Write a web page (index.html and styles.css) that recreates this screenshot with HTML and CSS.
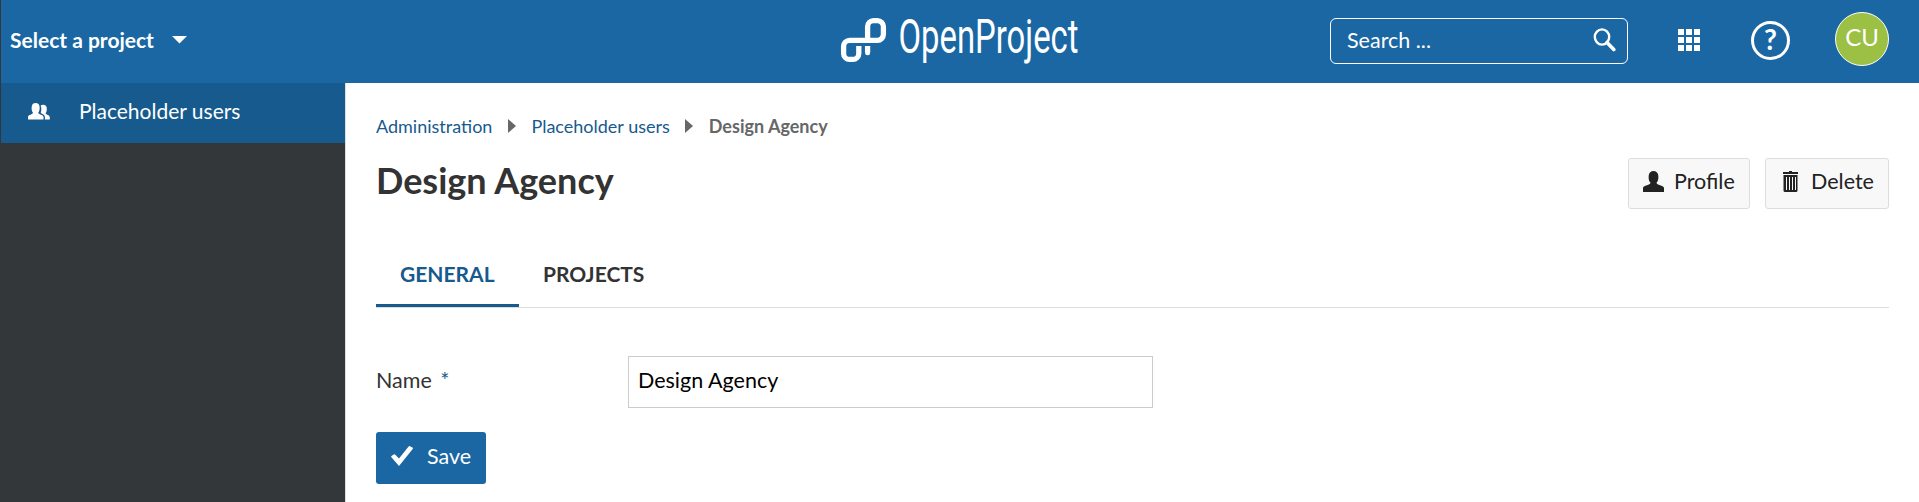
FILE: index.html
```html
<!DOCTYPE html>
<html lang="en">
<head>
<meta charset="utf-8">
<title>Design Agency - OpenProject</title>
<link rel="stylesheet" href="styles.css">
</head>
<body>
<header class="top-bar">
  <button class="project-select">Select a project
    <svg width="16" height="8" viewBox="0 0 16 8"><path d="M0 0h15L7.500 7.500z" fill="currentColor"/></svg>
  </button>
  <svg class="logo" width="242" height="54" viewBox="0 0 242 54" role="img" aria-label="OpenProject">
    <g fill="none" stroke="#fff" stroke-width="5.300">
      <path d="M27.600 27.300V13.600A6 6 0 0 1 33.600 7.600H37.400A6 6 0 0 1 43.400 13.600V21.300A6 6 0 0 1 37.400 27.300H9.600A6 6 0 0 0 3.600 33.300V40.400A6 6 0 0 0 9.600 46.400H12.800A6 6 0 0 0 18.800 40.400V33"/>
      <path d="M27.600 33V39"/>
      <path d="M27.600 39v.8" stroke-linecap="round" stroke-width="5"/>
    </g>
    <text class="wordmark" x="58.500" y="40" textLength="180" lengthAdjust="spacingAndGlyphs">OpenProject</text>
  </svg>
  <div class="top-tools">
    <div class="search"><span>Search ...</span>
      <svg width="23" height="24" viewBox="0 0 23 24" fill="none" stroke="currentColor"><ellipse cx="9" cy="9" rx="7.200" ry="7.600" stroke-width="2.400"/><path d="M14 14.500l6.800 7" stroke-width="3.600" stroke-linecap="round"/></svg>
    </div>
    <svg class="modules" width="22" height="22" viewBox="0 0 22 22" fill="currentColor"><path d="M0 0h6v6H0zM8 0h6v6H8zM16 0h6v6h-6zM0 8h6v6H0zM8 8h6v6H8zM16 8h6v6h-6zM0 16h6v6H0zM8 16h6v6H8zM16 16h6v6h-6z"/></svg>
    <div class="help">?</div>
    <div class="avatar">CU</div>
  </div>
</header>
<div class="layout">
  <nav class="sidebar">
    <a class="menu-item">
      <svg width="22" height="17" viewBox="0 0 22 17" fill="currentColor"><path d="M0 16.500V14C0 11.800 5 11.500 5 9.800C3.700 8.500 3.500 6 3.700 3.800C4 1 5.500 0 7.600 0S11.300 1 11.600 3.800C11.800 6 11.500 8.500 10.200 9.800C10.200 11.500 15.500 11.800 15.500 14V16.500z"/><path d="M12.600 2.600C13.400 1.900 14.500 1.500 15.700 1.700C17.800 2 18.800 3.200 18.800 5.500C18.800 7.500 18.600 9 17.600 10.300C17.700 11.800 21.800 12 21.800 14.200V16.500H16.900V13.800C16.700 11.800 14.400 11 12.700 9.900C13.600 7.700 13.600 5 12.600 2.600z"/></svg>
      <span>Placeholder users</span>
    </a>
  </nav>
  <main class="content">
    <div class="breadcrumb">
      <a>Administration</a>
      <svg width="8" height="14" viewBox="0 0 8 14"><path d="M0 0l8 7-8 7z" fill="#676767"/></svg>
      <a>Placeholder users</a>
      <svg width="8" height="14" viewBox="0 0 8 14"><path d="M0 0l8 7-8 7z" fill="#676767"/></svg>
      <strong>Design Agency</strong>
    </div>
    <div class="title-row">
      <h1>Design Agency</h1>
      <div class="actions">
        <button class="button profile">
          <svg width="21" height="21" viewBox="0 0 21 21" fill="currentColor"><path d="M0 21V16.800C.5 14.500 7.500 14 7.500 11.800C5.600 10 5.500 7 5.700 4.500C6 1.500 8 0 10.500 0S15 1.500 15.300 4.500C15.500 7 15.400 10 13.500 11.800C13.500 14 20.500 14.500 21 16.800V21z"/></svg>
          <span>Profile</span>
        </button>
        <button class="button delete">
          <svg width="15" height="21" viewBox="0 0 15 21" fill="currentColor"><path fill-rule="evenodd" d="M6 0h3v1h6v2H0V1h6zM.5 4h14v15.500a1.500 1.500 0 0 1-1.500 1.500H2a1.500 1.500 0 0 1-1.500-1.500zM3 6v13h1V6zM6 6v13h1V6zM9 6v13h1V6zM12 6v13h1V6z"/></svg>
          <span>Delete</span>
        </button>
      </div>
    </div>
    <div class="tabs"><a class="tab active">GENERAL</a><a class="tab">PROJECTS</a></div>
    <form class="form">
      <div class="field"><label for="name">Name <span class="required">*</span></label><input id="name" type="text" value="Design Agency"></div>
      <button class="save" type="button">
        <svg width="22" height="20" viewBox="0 0 22 20" fill="currentColor"><path d="M.4 11.200Q-.2 10.400.5 9.900L2.700 8.400Q3.400 8 4 8.600L8 12.500L17.600.6Q18.200-.2 19 .3L21.400 1.500Q22.300 2 21.700 2.900L8 20z"/></svg>
        <span>Save</span>
      </button>
    </form>
  </main>
</div>
</body>
</html>
```
FILE: styles.css
```css
* { box-sizing: border-box; }
body { margin: 0; height: 502px; overflow: hidden; background: #fff; color: #333; font: 21px/30px Lato, sans-serif; border-left: 1px solid #333739; }
button, input { font: inherit; margin: 0; }
svg { display: block; flex: none; }
h1 { margin: 0; }
.top-bar { height: 83px; background: #1a67a3; color: #fff; display: grid; grid-template-columns: 839px 242px 1fr; align-items: start; }
.project-select { border: 0; background: none; color: inherit; padding: 25px 0 0 9px; font-weight: 700; display: flex; align-items: center; gap: 18px; }
.logo { margin-top: 13px; overflow: visible; }
.wordmark { font-family: Roboto, sans-serif; font-size: 48px; font-weight: 400; line-height: 50px; fill: #fff; }
.top-tools { display: flex; justify-content: flex-end; padding-right: 30px; }
.search { width: 298px; height: 46px; margin-top: 18px; border: 1px solid #fff; border-radius: 6px; display: flex; align-items: center; justify-content: space-between; padding: 0 11px 2px 16px; font-size: 21.5px; }
.modules { margin: 29px 51px 0 50px; }
.help { width: 39px; height: 39px; margin-top: 21px; border: 3px solid #fff; border-radius: 50%; font-size: 28px; font-weight: 700; line-height: 31px; text-align: center; }
.avatar { width: 54px; height: 54px; margin: 12px 0 0 45px; border: 1px solid #fff; border-radius: 50%; background: #9bc043; font-size: 24px; line-height: 47px; text-align: center; }
.layout { display: flex; height: 419px; }
.sidebar { width: 344px; background: #333739; color: #fff; }
.menu-item { display: flex; align-items: center; height: 60px; background: #175a8e; padding: 0 0 4px 27px; gap: 29px; }
.content { flex: 1; padding: 28px 30px 0 30px; border-left: 1px solid #ddd; }
.breadcrumb { display: flex; align-items: center; gap: 15.5px; font-size: 18px; line-height: 30px; color: #676767; }
.breadcrumb a { color: #175a8e; }
.title-row { display: flex; justify-content: space-between; align-items: flex-start; margin-top: 16px; }
.title-row h1 { font-size: 36px; line-height: 46px; }
.actions { display: flex; gap: 15px; padding-top: 1px; }
.button { height: 51px; border: 1px solid #ddd; border-radius: 3px; background: #f8f8f8; color: #222; display: flex; align-items: center; padding: 0 0 5px 14px; font-size: 21.5px; }
.profile { width: 122px; gap: 10px; }
.delete { width: 124px; padding-left: 17px; gap: 13px; }
.tabs { display: flex; height: 99px; border-bottom: 1px solid #ddd; align-items: flex-end; font-weight: 700; }
.tab { height: 49px; padding: 0 24px; line-height: 31px; border-bottom: 3px solid transparent; }
.tab.active { width: 143px; color: #175a8e; border-color: #175a8e; }
.form { padding-top: 48px; font-size: 21.5px; }
.field { display: flex; }
.field label { width: 252px; padding-top: 9px; }
.required { color: #175a8e; margin-left: 3px; }
.field input { width: 525px; height: 52px; border: 1px solid #ccc; border-radius: 0; padding: 0 9px 4px; color: #000; background: #fff; }
.save { display: flex; align-items: center; width: 110px; height: 52px; margin-top: 24px; padding: 0 0 4px 15px; gap: 14px; border: 0; border-radius: 3px; background: #1a67a3; color: #fff; }
```
